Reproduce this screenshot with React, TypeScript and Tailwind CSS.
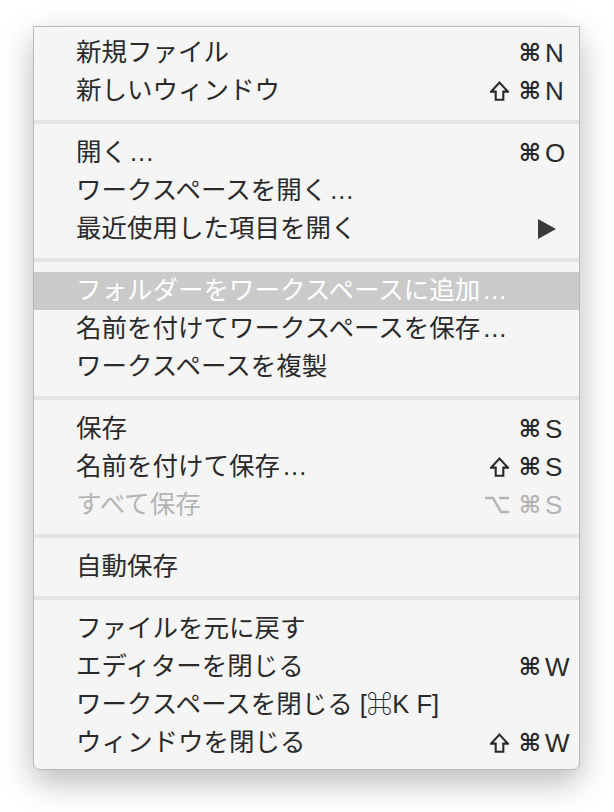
import React from 'react';

type Item = {
    label: string;
    mods?: string[];
    keyName?: string;
    submenu?: boolean;
    disabled?: boolean;
    active?: boolean;
};

const groups: Item[][] = [
    [
        { label: '新規ファイル', mods: ['cmd'], keyName: 'N' },
        { label: '新しいウィンドウ', mods: ['shift', 'cmd'], keyName: 'N' },
    ],
    [
        { label: '開く...', mods: ['cmd'], keyName: 'O' },
        { label: 'ワークスペースを開く...' },
        { label: '最近使用した項目を開く', submenu: true },
    ],
    [
        { label: 'フォルダーをワークスペースに追加...', active: true },
        { label: '名前を付けてワークスペースを保存...' },
        { label: 'ワークスペースを複製' },
    ],
    [
        { label: '保存', mods: ['cmd'], keyName: 'S' },
        { label: '名前を付けて保存...', mods: ['shift', 'cmd'], keyName: 'S' },
        { label: 'すべて保存', mods: ['opt', 'cmd'], keyName: 'S', disabled: true },
    ],
    [{ label: '自動保存' }],
    [
        { label: 'ファイルを元に戻す' },
        { label: 'エディターを閉じる', mods: ['cmd'], keyName: 'W' },
        { label: 'ワークスペースを閉じる [⌘K F]' },
        { label: 'ウィンドウを閉じる', mods: ['shift', 'cmd'], keyName: 'W' },
    ],
];

const Mod: React.FC<{ name: string }> = ({ name }) => {
    if (name === 'shift') {
        return (
            <svg width="19" height="20" viewBox="0 0 19 20">
                <polygon
                    points="9.5,1.6 17.8,10.6 13.3,10.6 13.3,18.8 5.7,18.8 5.7,10.6 1.2,10.6"
                    fill="none"
                    stroke="currentColor"
                    strokeWidth="2.1"
                />
            </svg>
        );
    }
    if (name === 'opt') {
        return (
            <svg width="24" height="18" viewBox="0 0 24 18">
                <path d="M0 2 H8 L16 16 H24 M14 2 H24" fill="none" stroke="currentColor" strokeWidth="2.4" />
            </svg>
        );
    }
    return <span className="text-[24px] font-bold leading-none">⌘</span>;
};

const Label: React.FC<{ text: string }> = ({ text }) => {
    if (text.endsWith('...')) {
        return (
            <span className="flex-1 whitespace-nowrap">
                {text.slice(0, -3)}
                <span className="pl-[3px] tracking-[1px]">...</span>
            </span>
        );
    }
    return <span className="flex-1 whitespace-nowrap">{text}</span>;
};

const MenuRow: React.FC<{ item: Item }> = ({ item }) => {
    const color = item.active
        ? 'bg-[#cacaca] text-white'
        : item.disabled
        ? 'text-[#b4b4b4]'
        : 'text-[#2a2a2a]';

    return (
        <div className={`flex h-[38px] items-center pl-[42px] pr-[10px] ${color}`}>
            <Label text={item.label} />
            {item.keyName && (
                <div className="flex items-center font-['DejaVu_Sans','Liberation_Sans',sans-serif]">
                    <div className="flex items-center gap-[10px]">
                        {item.mods?.map(m => <Mod key={m} name={m} />)}
                    </div>
                    <span className="w-[28px] pl-[4px] font-['Liberation_Sans',sans-serif] text-[26px]">{item.keyName}</span>
                </div>
            )}
            {item.submenu && (
                <svg width="18" height="20" viewBox="0 0 18 20" className="mr-[13px]">
                    <polygon points="0,0 18,10 0,20" fill="#3a3a3a" />
                </svg>
            )}
        </div>
    );
};

const App: React.FC = () => {
    return (
        <div className="min-h-screen bg-white pl-[33px] pt-[26px] font-['Liberation_Sans','Noto_Sans_CJK_JP',sans-serif] text-[25.5px] leading-none">
            <div className="w-[547px] rounded-b-[7px] border border-[#b9b9b9] bg-[#f5f5f5] py-[7px] shadow-[0_12px_32px_rgba(0,0,0,0.28)]">
                {groups.map((group, gi) => (
                    <div key={gi}>
                        {gi > 0 && (
                            <div className="flex h-[24px] items-center">
                                <div className="h-[4px] w-full bg-[#e3e3e3]" />
                            </div>
                        )}
                        {group.map(item => (
                            <MenuRow key={item.label} item={item} />
                        ))}
                    </div>
                ))}
            </div>
        </div>
    );
};

export default App;
